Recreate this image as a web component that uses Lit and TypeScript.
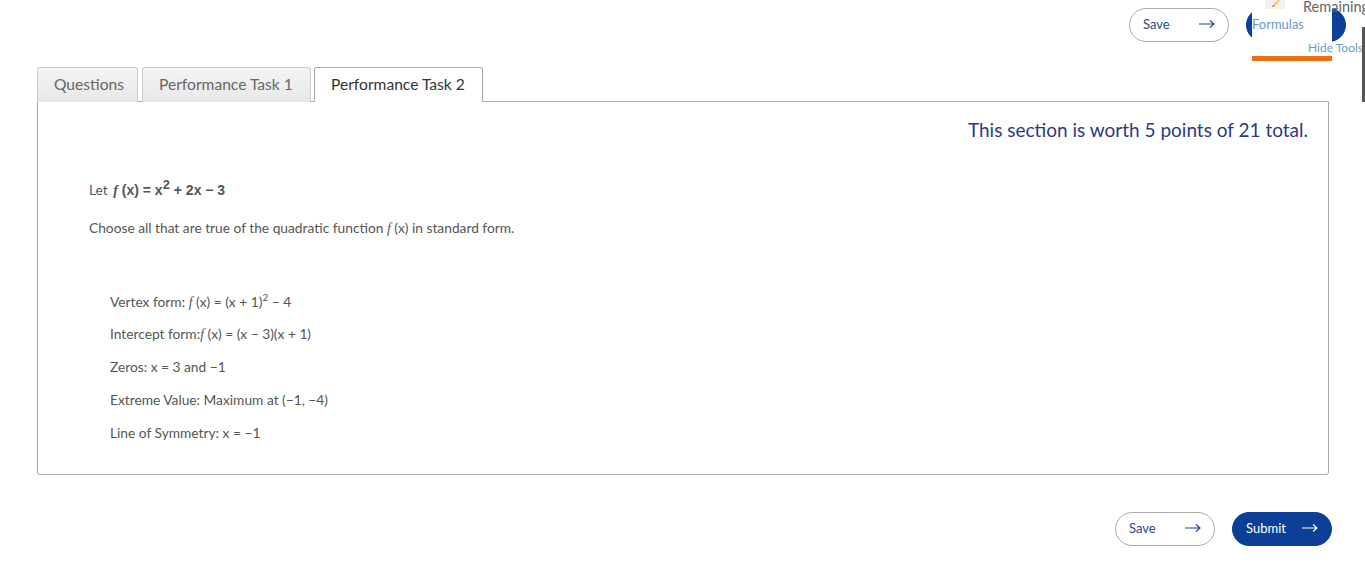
import { LitElement, css, html } from 'lit';
import { customElement } from 'lit/decorators.js';

const arrow = html`<svg class="arrow" width="16" height="10" viewBox="0 0 16 10">
    <path d="M0 5H15M11 1.5 15 5 11 8.5" fill="none" stroke="currentColor" stroke-width="1.1" />
</svg>`;

@customElement('app-root')
export class AppRoot extends LitElement {
    static styles = css`
        :host {
            display: block;
            position: relative;
            height: 570px;
            overflow: hidden;
            background: #fff;
            color: #555;
            font-family: 'Lato', sans-serif;
            font-size: 13.75px;
        }

        .actions {
            display: flex;
            justify-content: flex-end;
            gap: 17px;
        }

        .actions.top {
            height: 50px;
            padding: 8px 19px 0 0;
            box-sizing: border-box;
        }

        .actions.bottom {
            margin-top: 37px;
            padding-right: 33px;
        }

        .btn {
            display: flex;
            align-items: center;
            justify-content: space-between;
            box-sizing: border-box;
            width: 100px;
            height: 34px;
            padding: 0 13px 3px 13px;
            border: 1px solid #aaa;
            border-radius: 17px;
            background: #fff;
            color: #1d4a86;
            font-size: 13px;
        }

        .btn.primary {
            border-color: #0c3f97;
            background: #0c3f97;
            color: #fff;
        }

        .tools {
            position: absolute;
            top: 0;
            left: 1252px;
            width: 80px;
            height: 56px;
            border-bottom: 5px solid #ee6f11;
            background: #fff;
            color: #6a9bc8;
            font-size: 13px;
        }

        .pencil {
            position: absolute;
            top: 0;
            left: 13px;
        }

        .formulas {
            position: absolute;
            top: 16px;
            left: 0;
        }

        .hide {
            position: absolute;
            top: 40px;
            left: 56px;
            font-size: 12px;
            white-space: nowrap;
        }

        .remaining {
            position: absolute;
            top: -2px;
            left: 51px;
            color: #666;
            font-size: 14.5px;
            white-space: nowrap;
        }

        .scroll {
            position: absolute;
            top: 27px;
            right: 0;
            width: 3px;
            height: 75px;
            background: #555;
        }

        .tabs {
            display: flex;
            gap: 3px;
            height: 35px;
            margin: 17px 0 -1px 37px;
        }

        .tab {
            position: relative;
            box-sizing: border-box;
            height: 35px;
            padding: 7px 16px 0;
            border: 1px solid #ccc;
            border-bottom: none;
            border-radius: 3px 3px 0 0;
            background: linear-gradient(#f4f4f4, #e8e8e8);
            color: #666;
            font-size: 15.6px;
            white-space: nowrap;
        }

        .tab.first {
            width: 101px;
            margin-right: 1px;
        }

        .tab.wide {
            width: 169px;
        }

        .tab.active {
            z-index: 1;
            border-color: #aaa;
            background: #fff;
            color: #333;
        }

        .panel {
            box-sizing: border-box;
            width: 1292px;
            height: 374px;
            margin-left: 37px;
            padding: 16px 20px 0 51px;
            border: 1px solid #aaa;
            border-radius: 0 0 3px 3px;
        }

        .worth {
            margin-bottom: 38px;
            color: #2b3a82;
            font-family: 'Lato', sans-serif;
            font-size: 19px;
            line-height: 24px;
            text-align: right;
        }

        .stem {
            margin: 0;
            line-height: 20px;
        }

        .stem b {
            margin-left: 2px;
            font-family: 'Liberation Sans', sans-serif;
            font-size: 14px;
        }

        .stem sup {
            font-size: 13px;
            line-height: 0;
        }

        .prompt {
            margin: 17px 0 53px;
            line-height: 20px;
        }

        .choices {
            display: flex;
            flex-direction: column;
            gap: 13px;
            padding-left: 21px;
        }

        .choices div {
            height: 20px;
            line-height: 20px;
        }

        .choices div:first-child {
            height: 19px;
        }

        .choices sup {
            font-size: 10px;
            line-height: 0;
        }

        i {
            font-family: 'Liberation Serif', serif;
        }
    `;

    render() {
        return html`
            <div class="actions top">
                <div class="btn">Save ${arrow}</div>
                <div class="btn primary">Submit ${arrow}</div>
            </div>
            <div class="tabs">
                <div class="tab first">Questions</div>
                <div class="tab wide">Performance Task 1</div>
                <div class="tab wide active">Performance Task 2</div>
            </div>
            <div class="panel">
                <div class="worth">This section is worth 5 points of 21 total.</div>
                <p class="stem">Let <b><i>f</i> (x) = x<sup>2</sup> + 2x − 3</b></p>
                <p class="prompt">Choose all that are true of the quadratic function <i>f</i> (x) in standard form.</p>
                <div class="choices">
                    <div>Vertex form: <i>f</i> (x) = (x + 1)<sup>2</sup> − 4</div>
                    <div>Intercept form:<i>f</i> (x) = (x − 3)(x + 1)</div>
                    <div>Zeros: x = 3 and −1</div>
                    <div>Extreme Value: Maximum at (−1, −4)</div>
                    <div>Line of Symmetry: x = −1</div>
                </div>
            </div>
            <div class="actions bottom">
                <div class="btn">Save ${arrow}</div>
                <div class="btn primary">Submit ${arrow}</div>
            </div>
            <div class="tools">
                <svg class="pencil" width="20" height="9" viewBox="0 0 20 9">
                    <rect width="20" height="9" fill="#f1f1f1" />
                    <path d="M13 0 8 5 7 7 10 6 15 0Z" fill="#f0c860" />
                    <path d="M8 5 7 7 10 6Z" fill="#c9703a" />
                </svg>
                <span class="formulas">Formulas</span>
                <span class="hide">Hide Tools</span>
                <span class="remaining">Remaining</span>
            </div>
            <div class="scroll"></div>
        `;
    }
}
